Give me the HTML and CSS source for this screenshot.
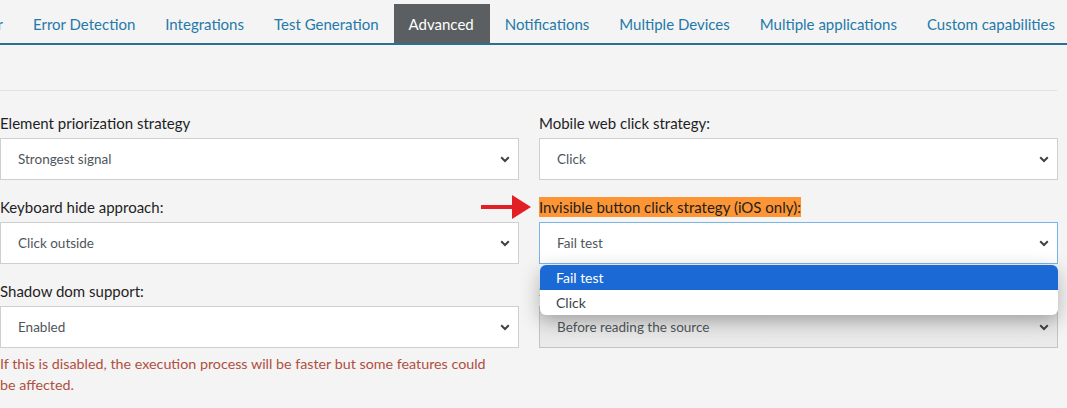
FILE: index.html
```html
<!DOCTYPE html>
<html>
<head>
<meta charset="utf-8">
<link rel="stylesheet" href="styles.css">
</head>
<body>
<nav class="tabs">
  <span class="tab tab-partial"><span class="tab-clip">Browser</span></span>
  <span class="tab">Error Detection</span>
  <span class="tab">Integrations</span>
  <span class="tab">Test Generation</span>
  <span class="tab active">Advanced</span>
  <span class="tab">Notifications</span>
  <span class="tab">Multiple Devices</span>
  <span class="tab">Multiple applications</span>
  <span class="tab">Custom capabilities</span>
</nav>
<main class="panel">
  <hr class="divider">
  <div class="form-grid">
    <div class="field">
      <label class="label">Element priorization strategy</label>
      <div class="select">
        <span class="select-value">Strongest signal</span>
        <svg class="chev" viewBox="0 0 10 7" width="10" height="7"><path d="M1.2 1.3 L5 5 L8.8 1.3" fill="none" stroke="#3d4347" stroke-width="2"/></svg>
      </div>
    </div>
    <div class="field">
      <label class="label">Mobile web click strategy:</label>
      <div class="select">
        <span class="select-value">Click</span>
        <svg class="chev" viewBox="0 0 10 7" width="10" height="7"><path d="M1.2 1.3 L5 5 L8.8 1.3" fill="none" stroke="#3d4347" stroke-width="2"/></svg>
      </div>
    </div>
    <div class="field">
      <label class="label">Keyboard hide approach:</label>
      <div class="select">
        <span class="select-value">Click outside</span>
        <svg class="chev" viewBox="0 0 10 7" width="10" height="7"><path d="M1.2 1.3 L5 5 L8.8 1.3" fill="none" stroke="#3d4347" stroke-width="2"/></svg>
      </div>
    </div>
    <div class="field">
      <div class="label-row">
        <svg class="arrow" viewBox="0 0 50 24" width="50" height="24"><rect x="0" y="10" width="32" height="4" fill="#e31f26"/><polygon points="31,0 50,12 31,24" fill="#e31f26"/></svg>
        <label class="label highlight">Invisible button click strategy (iOS only):</label>
      </div>
      <div class="select-wrap">
        <div class="select focused">
          <span class="select-value">Fail test</span>
          <svg class="chev" viewBox="0 0 10 7" width="10" height="7"><path d="M1.2 1.3 L5 5 L8.8 1.3" fill="none" stroke="#3d4347" stroke-width="2"/></svg>
        </div>
        <ul class="dropdown">
          <li class="option selected">Fail test</li>
          <li class="option">Click</li>
        </ul>
      </div>
    </div>
    <div class="field">
      <label class="label">Shadow dom support:</label>
      <div class="select">
        <span class="select-value">Enabled</span>
        <svg class="chev" viewBox="0 0 10 7" width="10" height="7"><path d="M1.2 1.3 L5 5 L8.8 1.3" fill="none" stroke="#3d4347" stroke-width="2"/></svg>
      </div>
      <p class="help">If this is disabled, the execution process will be faster but some features could be affected.</p>
    </div>
    <div class="field">
      <label class="label">Source reading approach:</label>
      <div class="select shaded">
        <span class="select-value">Before reading the source</span>
        <svg class="chev" viewBox="0 0 10 7" width="10" height="7"><path d="M1.2 1.3 L5 5 L8.8 1.3" fill="none" stroke="#3d4347" stroke-width="2"/></svg>
      </div>
    </div>
  </div>
</main>
</body>
</html>
```
FILE: styles.css
```css
* { box-sizing: border-box; }
html, body {
  margin: 0;
  padding: 0;
  background: #f4f4f4;
  font-family: Lato, "Open Sans", sans-serif;
  color: #222;
  overflow: hidden;
}
.tabs {
  display: flex;
  padding-top: 4px;
  border-bottom: 2px solid #2b6f95;
  white-space: nowrap;
  overflow: hidden;
  width: 1067px;
}
.tab {
  flex: none;
  height: 39px;
  line-height: 41px;
  padding: 0 15px;
  font-size: 15px;
  color: #2479aa;
}
.tab-partial {
  width: 18px;
  padding: 0 15px 0 0;
  overflow: hidden;
  display: flex;
  justify-content: flex-end;
}
.tab-clip { flex: none; }
.tab.active {
  background: #5b5f61;
  color: #fff;
  padding: 0 16px 0 15px;
}
.panel {
  width: 1057px;
  padding-top: 45px;
}
.divider {
  margin: 0;
  border: 0;
  border-top: 1px solid #e1e1e1;
}
.form-grid {
  display: grid;
  grid-template-columns: 519px 519px;
  column-gap: 20px;
  row-gap: 17px;
  padding-top: 22px;
}
.field { display: flex; flex-direction: column; align-items: flex-start; }
.label {
  display: inline-block;
  font-size: 15px;
  line-height: 20px;
  height: 20px;
  margin-bottom: 5px;
  color: #1f1f1f;
}
.label-row { position: relative; }
.highlight { background: #fd9535; }
.arrow {
  position: absolute;
  left: -58px;
  top: -2px;
}
.select-wrap { position: relative; width: 100%; }
.select {
  width: 100%;
  height: 42px;
  background: #fff;
  border: 1px solid #cfcfcf;
  display: flex;
  align-items: center;
  justify-content: space-between;
  padding: 0 8px 0 17px;
  font-size: 13.5px;
  color: #4f565b;
}
.select.focused { border-color: #78b5ea; }
.select.shaded {
  background: linear-gradient(#dadada, #e8e8e8 50%, #ebebeb);
  border-color: #c4c4c4;
}
.chev { flex: none; }
.dropdown {
  position: absolute;
  top: 43px;
  left: 1px;
  right: 0;
  margin: 0;
  padding: 0;
  list-style: none;
  background: #fff;
  border-radius: 6px;
  overflow: hidden;
  box-shadow: 0 6px 20px rgba(0, 0, 0, 0.28);
  z-index: 5;
}
.option {
  height: 25px;
  line-height: 25px;
  padding-left: 16px;
  font-size: 14px;
  color: #3c4348;
}
.option.selected { background: #1b69d4; color: #fff; }
.help {
  margin: 5px 0 0;
  font-size: 14.3px;
  line-height: 21px;
  color: #b14f3e;
  max-width: 500px;
}
```
